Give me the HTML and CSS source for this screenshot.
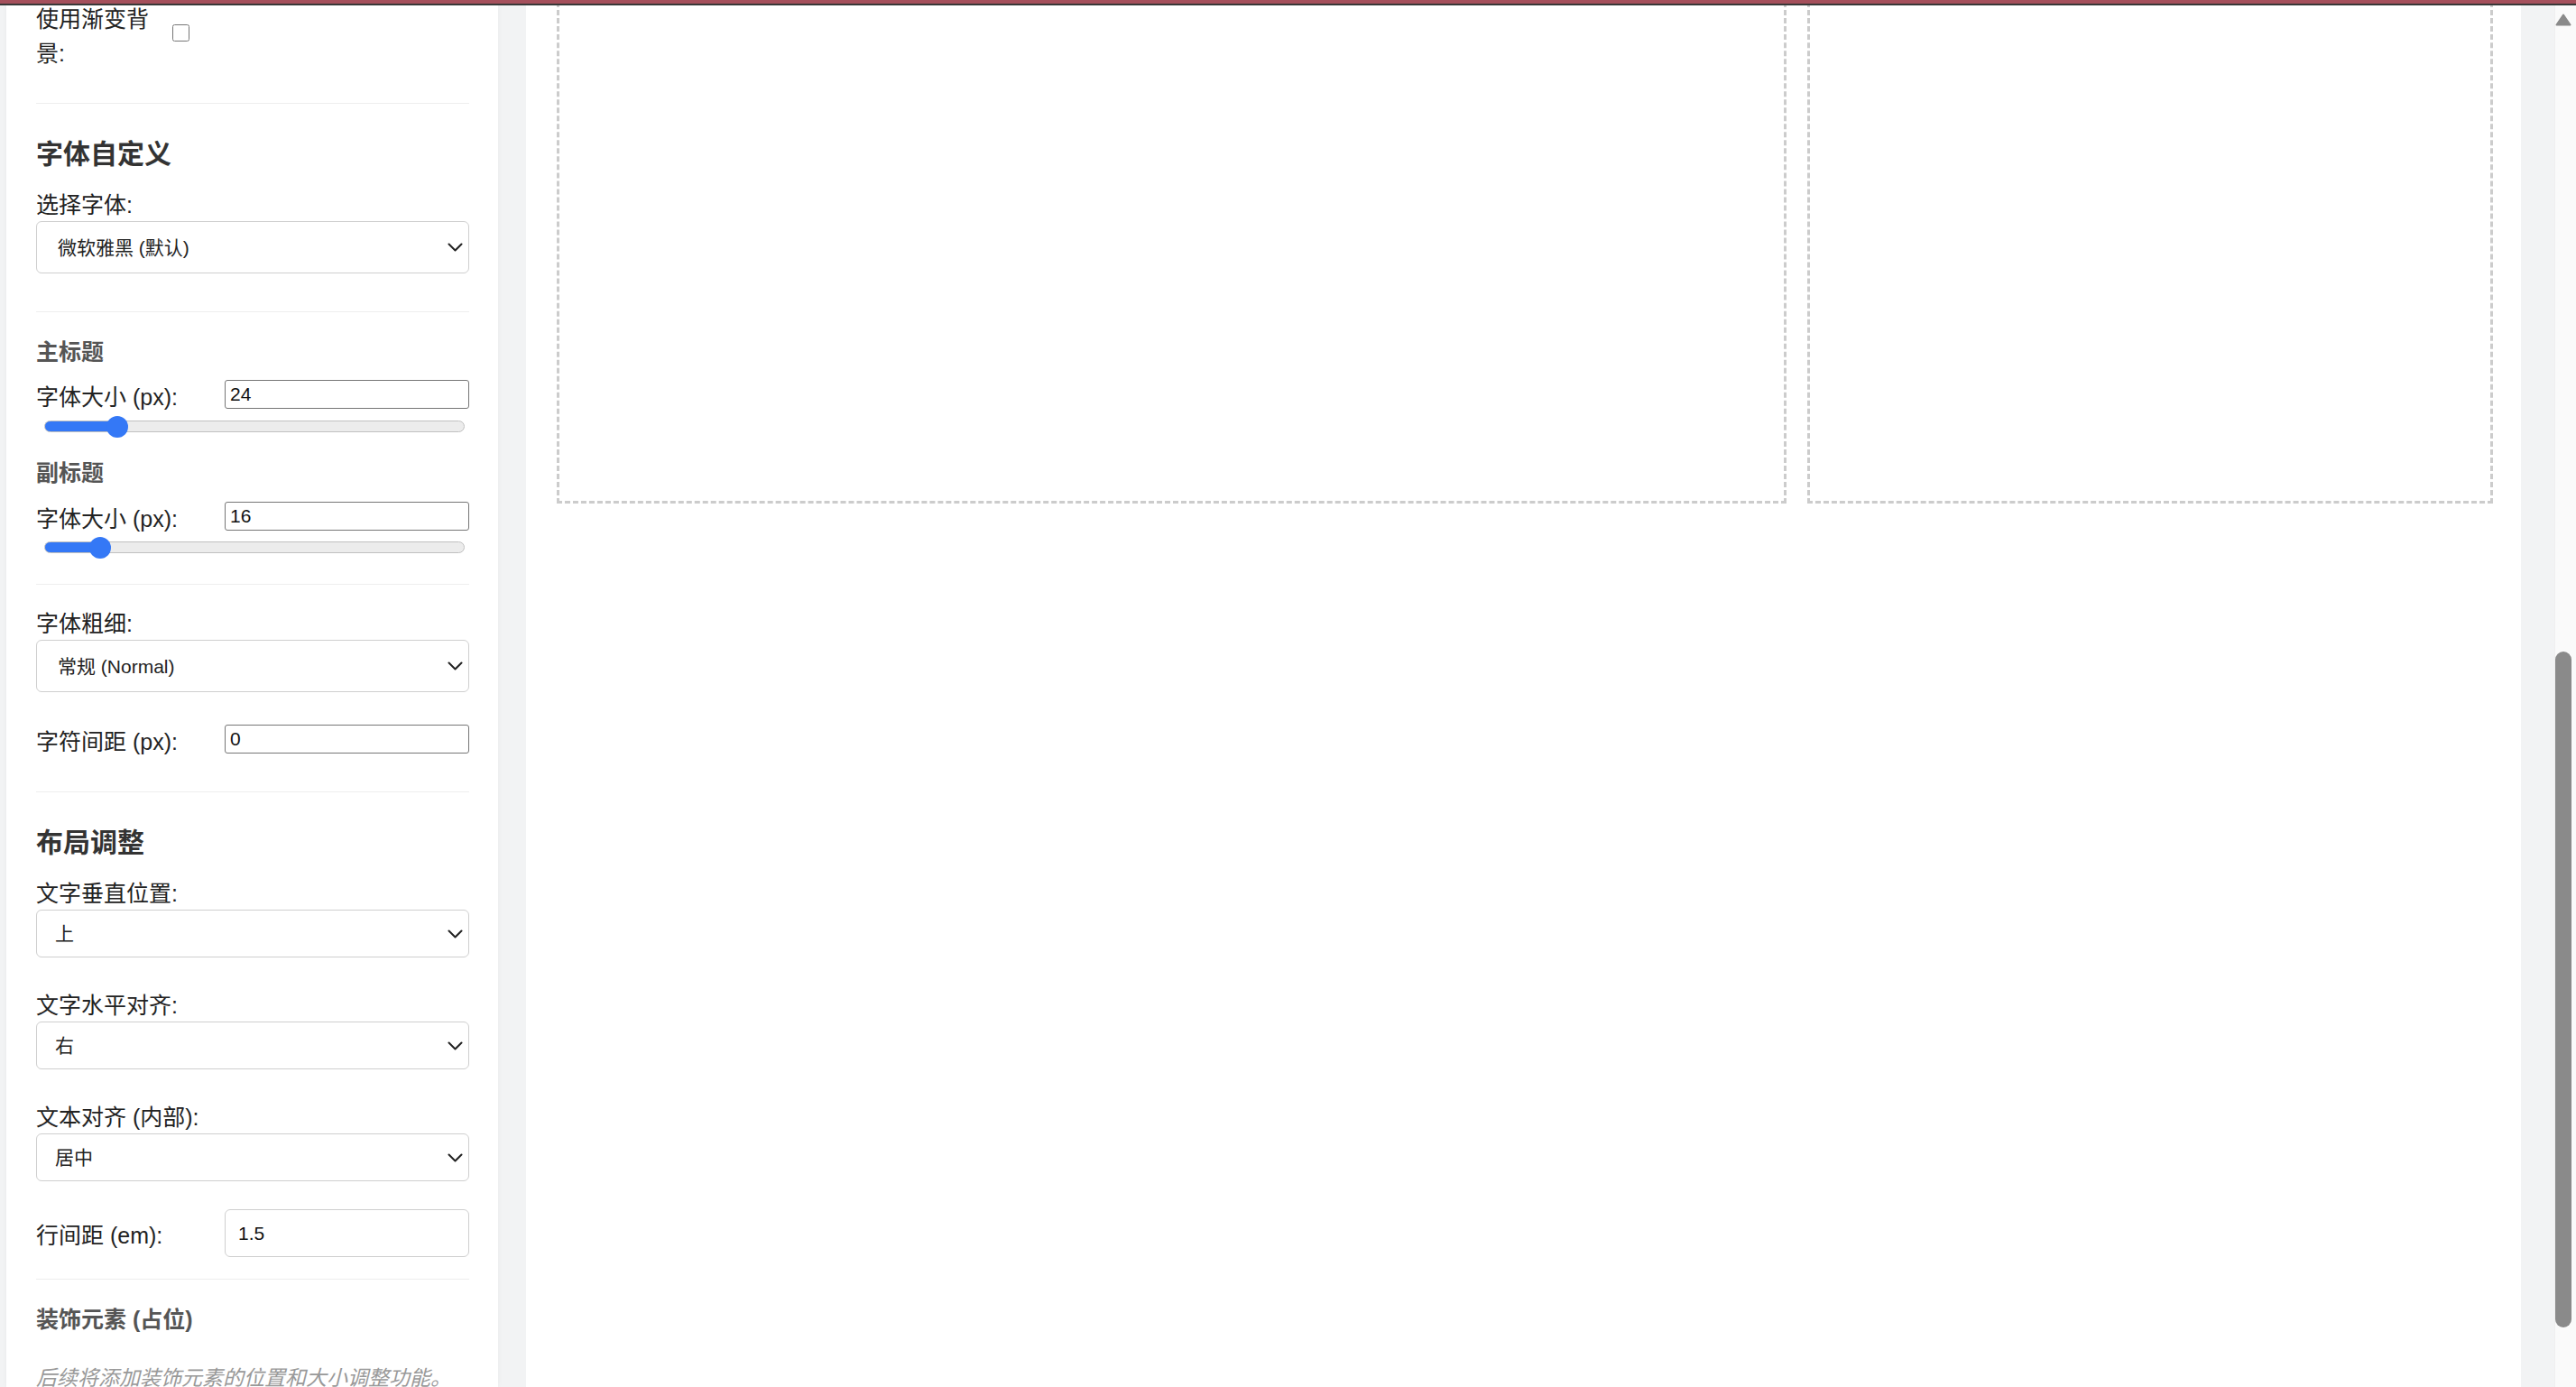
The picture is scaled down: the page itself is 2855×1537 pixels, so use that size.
FILE: index.html
```html
<!DOCTYPE html>
<html lang="zh-CN">
<head>
    <meta charset="UTF-8">
    <meta name="viewport" content="width=device-width, initial-scale=1.0">
    <title>封面生成器</title>
    <link rel="stylesheet" href="styles.css">
</head>
<body>
    <div class="top-bar"></div>

    <div class="app">
        <aside class="sidebar">
            <div class="check-row">
                <label for="useGradient">使用渐变背景:</label>
                <input type="checkbox" id="useGradient">
            </div>

            <hr class="divider">

            <h3 class="section-title">字体自定义</h3>
            <div class="form-group group-wide">
                <label class="field-label" for="fontFamily">选择字体:</label>
                <div class="select-wrap">
                    <select id="fontFamily" class="select select-lg">
                        <option>微软雅黑 (默认)</option>
                        <option>宋体</option>
                        <option>黑体</option>
                    </select>
                    <svg class="chevron" width="17" height="10" viewBox="0 0 17 10"><polyline points="1.5,1.5 8.5,8.5 15.5,1.5" fill="none" stroke="#222" stroke-width="2" stroke-linecap="round" stroke-linejoin="round"/></svg>
                </div>
            </div>

            <hr class="divider">

            <h4 class="sub-title">主标题</h4>
            <div class="input-row">
                <label for="titleSize">字体大小 (px):</label>
                <input type="text" id="titleSize" class="num-input" value="24">
            </div>
            <input type="range" class="slider" min="10" max="100" value="24" style="--fill: 17.3%">

            <h4 class="sub-title sub-title-next">副标题</h4>
            <div class="input-row">
                <label for="subSize">字体大小 (px):</label>
                <input type="text" id="subSize" class="num-input" value="16">
            </div>
            <input type="range" class="slider slider-last" min="8" max="80" value="16" style="--fill: 13.1%">

            <hr class="divider">

            <div class="form-group">
                <label class="field-label" for="fontWeight">字体粗细:</label>
                <div class="select-wrap">
                    <select id="fontWeight" class="select select-lg">
                        <option>常规 (Normal)</option>
                        <option>粗体 (Bold)</option>
                    </select>
                    <svg class="chevron" width="17" height="10" viewBox="0 0 17 10"><polyline points="1.5,1.5 8.5,8.5 15.5,1.5" fill="none" stroke="#222" stroke-width="2" stroke-linecap="round" stroke-linejoin="round"/></svg>
                </div>
            </div>
            <div class="input-row group-wide">
                <label for="letterSpacing">字符间距 (px):</label>
                <input type="text" id="letterSpacing" class="num-input" value="0">
            </div>

            <hr class="divider">

            <h3 class="section-title">布局调整</h3>
            <div class="form-group">
                <label class="field-label" for="vAlign">文字垂直位置:</label>
                <div class="select-wrap">
                    <select id="vAlign" class="select">
                        <option>上</option>
                        <option>中</option>
                        <option>下</option>
                    </select>
                    <svg class="chevron" width="17" height="10" viewBox="0 0 17 10"><polyline points="1.5,1.5 8.5,8.5 15.5,1.5" fill="none" stroke="#222" stroke-width="2" stroke-linecap="round" stroke-linejoin="round"/></svg>
                </div>
            </div>
            <div class="form-group">
                <label class="field-label" for="hAlign">文字水平对齐:</label>
                <div class="select-wrap">
                    <select id="hAlign" class="select">
                        <option>右</option>
                        <option>中</option>
                        <option>左</option>
                    </select>
                    <svg class="chevron" width="17" height="10" viewBox="0 0 17 10"><polyline points="1.5,1.5 8.5,8.5 15.5,1.5" fill="none" stroke="#222" stroke-width="2" stroke-linecap="round" stroke-linejoin="round"/></svg>
                </div>
            </div>
            <div class="form-group group-short">
                <label class="field-label" for="textAlign">文本对齐 (内部):</label>
                <div class="select-wrap">
                    <select id="textAlign" class="select">
                        <option>居中</option>
                        <option>左对齐</option>
                        <option>右对齐</option>
                    </select>
                    <svg class="chevron" width="17" height="10" viewBox="0 0 17 10"><polyline points="1.5,1.5 8.5,8.5 15.5,1.5" fill="none" stroke="#222" stroke-width="2" stroke-linecap="round" stroke-linejoin="round"/></svg>
                </div>
            </div>
            <div class="input-row input-row-lg">
                <label for="lineHeight">行间距 (em):</label>
                <input type="text" id="lineHeight" class="num-input num-input-lg" value="1.5">
            </div>

            <hr class="divider">

            <h4 class="sub-title">装饰元素 (占位)</h4>
            <p class="note">后续将添加装饰元素的位置和大小调整功能。</p>
        </aside>

        <main class="main">
            <div class="preview-row">
                <div class="preview-box"></div>
                <div class="preview-box"></div>
            </div>
        </main>
    </div>

    <div class="scrollbar">
        <svg class="scroll-arrow" width="18" height="14" viewBox="0 0 18 14"><path d="M9 1.5 L16.5 12.5 L1.5 12.5 Z" fill="#8a8a8a" stroke="#8a8a8a" stroke-width="2" stroke-linejoin="round"/></svg>
        <div class="scroll-thumb"></div>
    </div>
</body>
</html>
```

FILE: styles.css
```css
* {
    box-sizing: border-box;
    margin: 0;
    padding: 0;
}

body {
    font-family: 'Liberation Sans', 'Noto Sans CJK SC', sans-serif;
    background-color: #f2f3f4;
    color: #222;
    height: 100vh;
    overflow: hidden;
}

.top-bar {
    height: 6px;
    background-color: #a5505c;
    border-bottom: 2px solid #383838;
}

.app {
    display: flex;
    gap: 31px;
    height: calc(100vh - 6px);
    padding: 0 61px 0 7px;
    overflow: hidden;
}

/* sidebar */

.sidebar {
    flex: 0 0 545px;
    background-color: #fff;
    padding: 0 32px 0 33px;
    overflow: hidden;
    box-shadow: 0 0 6px rgba(0, 0, 0, 0.04);
    font-size: 25px;
}

.check-row {
    display: flex;
    align-items: center;
    height: 76px;
    margin: -4px 0 36px;
    line-height: 38px;
}

.check-row label {
    width: 140px;
}

.check-row input {
    width: 19px;
    height: 19px;
    margin: -7px 0 0 11px;
}

.divider {
    border: none;
    border-top: 1px solid #eeeeee;
    margin: 0 0 26px;
}

.section-title {
    font-size: 30px;
    font-weight: bold;
    line-height: 36px;
    color: #333;
    margin: 38px 0 21px;
}

.sub-title {
    font-size: 25px;
    font-weight: bold;
    line-height: 36px;
    color: #555;
    margin-bottom: 13px;
}

.sub-title-next {
    margin-bottom: 14px;
}

.form-group {
    margin-bottom: 36px;
}

.form-group.group-wide,
.input-row.group-wide {
    margin-bottom: 42px;
}

.form-group.group-short {
    margin-bottom: 31px;
}

.field-label {
    display: block;
    line-height: 35px;
}

.select-wrap {
    position: relative;
}

.select {
    -webkit-appearance: none;
    appearance: none;
    display: block;
    width: 100%;
    height: 53px;
    padding: 0 40px 0 20px;
    border: 1px solid #cfcfcf;
    border-radius: 6px;
    background-color: #fff;
    color: #222;
    font-family: inherit;
    font-size: 21px;
}

.select-lg {
    height: 58px;
    padding-left: 23px;
}

.chevron {
    position: absolute;
    right: 7px;
    top: 50%;
    margin-top: -5px;
    pointer-events: none;
}

.input-row {
    display: flex;
    align-items: center;
    height: 32px;
}

.input-row label {
    flex: 0 0 209px;
    line-height: 36px;
    padding-top: 6px;
}

.num-input {
    flex: 1;
    min-width: 0;
    width: 100%;
    height: 32px;
    padding: 0 5px;
    border: 1px solid #767676;
    border-radius: 3px;
    font-family: 'Liberation Sans', sans-serif;
    font-size: 21px;
    color: #111;
    background-color: #fff;
}

.input-row-lg {
    height: 53px;
    margin-bottom: 24px;
}

.input-row-lg label {
    padding-top: 4px;
}

.num-input-lg {
    height: 53px;
    padding: 0 14px;
    border-color: #cfcfcf;
    border-radius: 6px;
}

.slider {
    -webkit-appearance: none;
    appearance: none;
    display: block;
    width: 466px;
    height: 13px;
    margin: 13px 0 27px 9px;
    border: 1px solid #c0c0c0;
    border-radius: 7px;
    background: linear-gradient(to right, #3478f6 var(--fill), #ececec var(--fill));
    outline: none;
}

.slider::-webkit-slider-thumb {
    -webkit-appearance: none;
    appearance: none;
    width: 24px;
    height: 24px;
    border: none;
    border-radius: 50%;
    background-color: #3478f6;
}

.slider-last {
    margin-top: 12px;
    margin-bottom: 34px;
}

.note {
    font-size: 23px;
    font-style: italic;
    line-height: 36px;
    color: #999;
    margin-top: 29px;
    white-space: nowrap;
}

/* preview */

.main {
    flex: 1;
    background-color: #fff;
    padding: 0 31px 0 34px;
    overflow: hidden;
}

.preview-row {
    display: grid;
    grid-template-columns: 1363px 760px;
    gap: 23px;
    margin-top: -40px;
}

.preview-box {
    height: 592px;
    border: 3px dashed #cccccc;
}

/* page scrollbar */

.scrollbar {
    position: fixed;
    top: 6px;
    right: 0;
    bottom: 0;
    width: 24px;
    background-color: #fafafa;
    border-left: 1px solid #efefef;
}

.scroll-arrow {
    position: absolute;
    top: 9px;
    left: 0;
}

.scroll-thumb {
    position: absolute;
    top: 716px;
    left: 0;
    width: 18px;
    height: 749px;
    border-radius: 9px;
    background-color: #8a8a8a;
}
```
